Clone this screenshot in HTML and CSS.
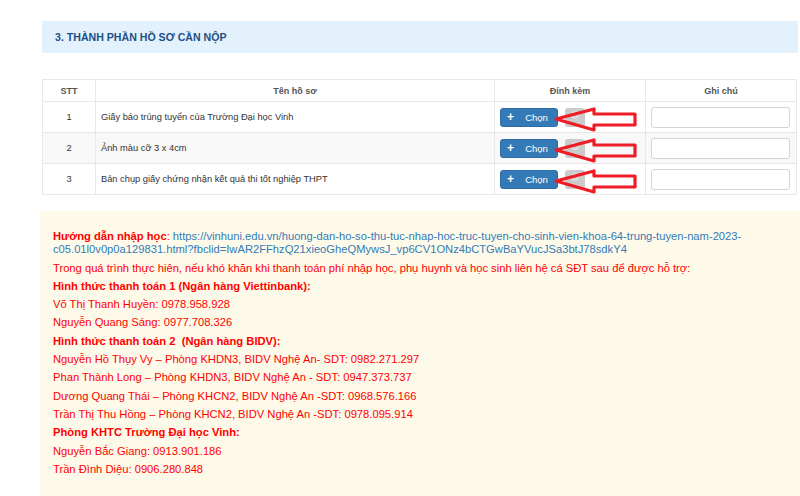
FILE: index.html
```html
<!DOCTYPE html>
<html lang="vi">
<head>
<meta charset="utf-8">
<title>Thành phần hồ sơ</title>
<link rel="stylesheet" href="styles.css">
</head>
<body>
<div class="page">
  <div class="section-head">3. THÀNH PHẦN HỒ SƠ CẦN NỘP</div>
  <table class="docs">
    <thead>
      <tr><th class="c-stt">STT</th><th class="c-name">Tên hồ sơ</th><th class="c-att">Đính kèm</th><th class="c-note">Ghi chú</th></tr>
    </thead>
    <tbody>
      <tr>
        <td class="c-stt">1</td>
        <td class="c-name">Giấy báo trúng tuyển của Trường Đại học Vinh</td>
        <td class="c-att">
          <div class="att">
            <span class="btn-choose"><span class="plus">+</span>Chọn</span>
            <span class="btn-gray"><svg viewBox="0 0 20 19" width="20" height="19"><circle cx="10" cy="7" r="3" fill="none" stroke="#e4e4e4" stroke-width="1.4"/></svg></span>
            <svg class="arrow" viewBox="0 0 90 26" width="90" height="26"><polygon points="4,13 42,3 42,8 83,8 83,19 42,19 42,24" fill="none" stroke="#ee1c25" stroke-width="3.2" stroke-linejoin="round"/></svg>
          </div>
        </td>
        <td class="c-note"><input class="note" type="text"></td>
      </tr>
      <tr class="alt">
        <td class="c-stt">2</td>
        <td class="c-name">Ảnh màu cỡ 3 x 4cm</td>
        <td class="c-att">
          <div class="att">
            <span class="btn-choose"><span class="plus">+</span>Chọn</span>
            <span class="btn-gray"><svg viewBox="0 0 20 19" width="20" height="19"><circle cx="10" cy="7" r="3" fill="none" stroke="#e4e4e4" stroke-width="1.4"/></svg></span>
            <svg class="arrow" viewBox="0 0 90 26" width="90" height="26"><polygon points="4,13 42,3 42,8 83,8 83,19 42,19 42,24" fill="none" stroke="#ee1c25" stroke-width="3.2" stroke-linejoin="round"/></svg>
          </div>
        </td>
        <td class="c-note"><input class="note" type="text"></td>
      </tr>
      <tr>
        <td class="c-stt">3</td>
        <td class="c-name">Bản chụp giấy chứng nhận kết quả thi tốt nghiệp THPT</td>
        <td class="c-att">
          <div class="att">
            <span class="btn-choose"><span class="plus">+</span>Chọn</span>
            <span class="btn-gray"><svg viewBox="0 0 20 19" width="20" height="19"><circle cx="10" cy="7" r="3" fill="none" stroke="#e4e4e4" stroke-width="1.4"/></svg></span>
            <svg class="arrow" viewBox="0 0 90 26" width="90" height="26"><polygon points="4,13 42,3 42,8 83,8 83,19 42,19 42,24" fill="none" stroke="#ee1c25" stroke-width="3.2" stroke-linejoin="round"/></svg>
          </div>
        </td>
        <td class="c-note"><input class="note" type="text"></td>
      </tr>
    </tbody>
  </table>

  <div class="notice">
    <p><b>Hướng dẫn nhập học</b>: <a class="link" href="#">https://vinhuni.edu.vn/huong-dan-ho-so-thu-tuc-nhap-hoc-truc-tuyen-cho-sinh-vien-khoa-64-trung-tuyen-nam-2023-c05.01l0v0p0a129831.html?fbclid=IwAR2FFhzQ21xieoGheQMywsJ_vp6CV1ONz4bCTGwBaYVucJSa3btJ78sdkY4</a></p>
    <p>Trong quá trình thực hiên, nếu khó khăn khi thanh toán phí nhập học, phụ huynh và học sinh liên hệ cá SĐT sau để được hỗ trợ:</p>
    <p><b>Hình thức thanh toán 1 (Ngân hàng Viettinbank):</b></p>
    <p>Võ Thị Thanh Huyền: 0978.958.928</p>
    <p>Nguyễn Quang Sáng: 0977.708.326</p>
    <p><b>Hình thức thanh toán 2&nbsp; (Ngân hàng BIDV):</b></p>
    <p>Nguyễn Hồ Thụy Vy – Phòng KHDN3, BIDV Nghệ An- SDT: 0982.271.297</p>
    <p>Phan Thành Long – Phòng KHDN3, BIDV Nghệ An - SDT: 0947.373.737</p>
    <p>Dương Quang Thái – Phòng KHCN2, BIDV Nghệ An -SDT: 0968.576.166</p>
    <p>Trần Thị Thu Hồng – Phòng KHCN2, BIDV Nghệ An -SDT: 0978.095.914</p>
    <p><b>Phòng KHTC Trường Đại học Vinh:</b></p>
    <p>Nguyễn Bắc Giang: 0913.901.186</p>
    <p>Trần Đình Diệu: 0906.280.848</p>
  </div>
</div>
</body>
</html>
```
FILE: styles.css
```css
* { box-sizing: border-box; }
html, body { margin: 0; padding: 0; background: #fff; }
body { font-family: "Liberation Sans", Arial, sans-serif; color: #333; }

.page { padding: 21px 0 0 42px; }

.section-head {
  width: 756px;
  height: 32px;
  background: #e3f1fd;
  color: #1d4f86;
  font-size: 10.6px;
  font-weight: bold;
  line-height: 32px;
  padding-left: 13px;
}

.docs {
  margin-top: 26px;
  width: 755px;
  border-collapse: collapse;
  font-size: 9.3px;
  border: 1px solid #e8e8e8;
}
.docs th, .docs td { border: 1px solid #e8e8e8; padding: 0 5px; }
.docs th {
  height: 22px;
  font-weight: bold;
  color: #555;
  text-align: center;
  font-size: 9px;
}
.docs td { height: 31px; color: #333; }
.docs tr.alt td { background: #f8f8f8; }
.c-stt { width: 53px; text-align: center; }
.c-name { width: 400px; }
.docs td.c-stt { text-align: center; }
.c-att { width: 151px; }
.c-note { width: 151px; }

.att { position: relative; display: flex; align-items: center; gap: 7px; }
.btn-choose {
  display: inline-flex;
  align-items: center;
  width: 58px;
  height: 19px;
  background: #337ab7;
  border: 1px solid #2e6da4;
  border-radius: 3px;
  color: #fff;
  font-size: 9.5px;
  padding-left: 6px;
}
.plus { font-weight: bold; font-size: 12px; margin-right: 11px; line-height: 1; }
.btn-gray {
  display: inline-block;
  width: 20px;
  height: 19px;
  background: #cbcbcb;
  border-radius: 3px;
}
.btn-gray svg { display: block; }
.arrow { position: absolute; left: 52px; top: -2px; }

.note {
  display: block;
  width: 139px;
  height: 21px;
  border: 1px solid #d4d4d4;
  border-radius: 3px;
  background: #fff;
  margin: 0;
}

.notice {
  margin: 16px 0 0 -2px;
  width: 760px;
  min-height: 300px;
  background: #fefaea;
  padding: 19px 13px 0 13px;
  color: #ff0000;
  font-size: 11.2px;
}
.notice p { margin: 0 0 5px; line-height: 13.3px; }
.notice b { font-weight: bold; }
.link { color: #337ab7; text-decoration: none; }
```
